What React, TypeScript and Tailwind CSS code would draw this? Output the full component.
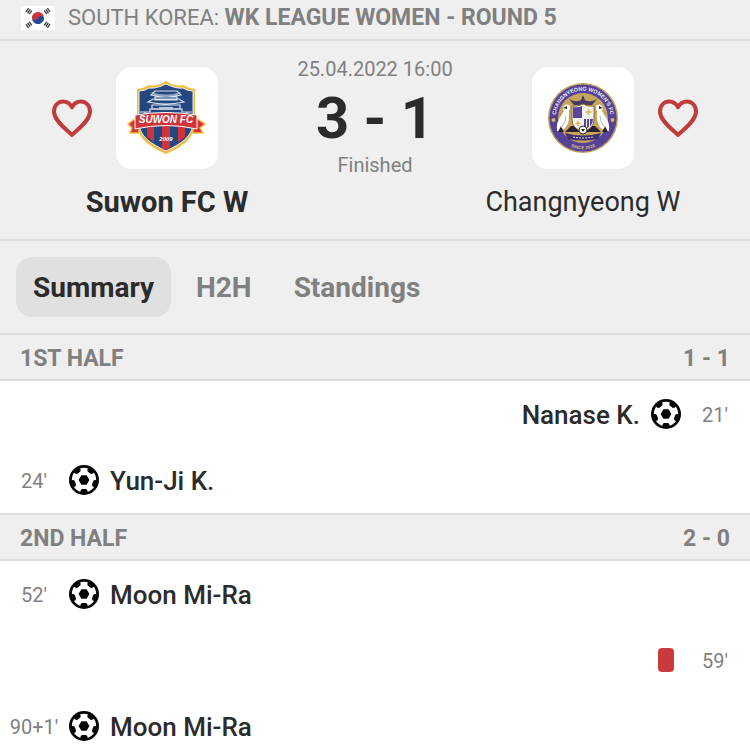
type Side = "home" | "away";

type MatchEvent = {
  minute: string;
  player?: string;
  side: Side;
  kind: "goal" | "red";
};

const halves: { title: string; score: string; events: MatchEvent[] }[] = [
  {
    title: "1ST HALF",
    score: "1 - 1",
    events: [
      { minute: "21'", player: "Nanase K.", side: "away", kind: "goal" },
      { minute: "24'", player: "Yun-Ji K.", side: "home", kind: "goal" },
    ],
  },
  {
    title: "2ND HALF",
    score: "2 - 0",
    events: [
      { minute: "52'", player: "Moon Mi-Ra", side: "home", kind: "goal" },
      { minute: "59'", side: "away", kind: "red" },
      { minute: "90+1'", player: "Moon Mi-Ra", side: "home", kind: "goal" },
    ],
  },
];

function Flag() {
  return (
    <svg viewBox="0 0 34 24" className="h-6 w-[34px]" aria-hidden="true">
      <rect width="34" height="24" fill="#fff" />
      <g transform="rotate(20 17 12)">
        <path d="M11 12a6 6 0 0 1 12 0z" fill="#cf3339" />
        <path d="M11 12a6 6 0 0 0 12 0z" fill="#214a97" />
        <circle cx="14" cy="12" r="3" fill="#cf3339" />
        <circle cx="20" cy="12" r="3" fill="#214a97" />
      </g>
      <g stroke="#444" strokeWidth="1.4">
        <path d="M5 5.8 7.6 2.2M6.6 7 9.2 3.4M8.2 8.2l2.6-3.6" />
        <path d="M29 5.8 26.4 2.2M27.4 7l-2.6-3.6M25.8 8.2l-2.6-3.6" />
        <path d="M5 18.2 7.6 21.8M6.6 17l2.6 3.6M8.2 15.8l2.6 3.6" />
        <path d="M29 18.2 26.4 21.8M27.4 17l-2.6 3.6M25.8 15.8l-2.6 3.6" />
      </g>
    </svg>
  );
}

function Heart() {
  return (
    <svg viewBox="0 0 48 48" className="size-12" fill="none" aria-hidden="true">
      <path
        d="M24 41C20 36.5 6 27.5 6 17.5C6 11.5 10.2 7.5 15 7.5C19.2 7.5 22.2 9.8 24 13.2C25.8 9.8 28.8 7.5 33 7.5C37.8 7.5 42 11.5 42 17.5C42 27.5 28 36.5 24 41Z"
        stroke="#c03c3c"
        strokeWidth="4"
        strokeLinejoin="round"
      />
    </svg>
  );
}

function Ball() {
  return (
    <svg viewBox="0 0 32 32" className="size-8 shrink-0" role="img" aria-label="Goal">
      <circle cx="16" cy="16" r="15" fill="#050505" />
      <circle cx="16" cy="16" r="12.2" fill="#fff" />
      <path d="M13.4 11.2h5.2l2.8 4.8-2.8 4.8h-5.2L10.600 16Z" fill="#050505" />
      {[0, 72, 144, 216, 288].map((angle) => (
        <path key={angle} d="M12 29 12.800 26 14 25H18L19.200 26 20 29Z" fill="#050505" transform={`rotate(${angle} 16 16)`} />
      ))}
    </svg>
  );
}

function RedCard() {
  return <span role="img" aria-label="Red card" className="mx-2 h-6 w-4 rounded bg-[#c93a3a]" />;
}

function SuwonCrest() {
  return (
    <svg viewBox="0 0 80 80" className="size-20" aria-hidden="true">
      <path d="M39 3Q49 9 56 7Q61 10 68 11V45C68 61 54 69 39 76C24 69 10 61 10 45V11Q17 10 22 7Q29 9 39 3Z" fill="#f2bd3c" />
      <path d="M39 6Q49 11 56 10Q60 13 66 13V44C66 59 53 66 39 73C25 66 12 59 12 44V13Q18 13 22 10Q29 11 39 6Z" fill="#23477f" stroke="#e8edf5" strokeWidth="1" />
      <path d="M24 14q15 5 30 0l-4 4H28Z" fill="#8fa4c4" />
      <g fill="none" stroke="#dbe3ef" strokeWidth="1.2">
        <path d="M24 17q15 4 30 0l-4-4H28ZM28 19h22v3H28ZM21 24q18 4 36 0l-5-3H26ZM25 27h28v4H25Z" />
        <path d="M13 34h10v-3h32v3h10M18 34v4M60 34v4" />
      </g>
      <path d="M32 29h14v3H32Z" fill="#b9c6da" />
      <g fill="#d2333b">
        <path d="M20 48h7v16l-7-5ZM35 48h8v22l-4 2-4-2ZM51 48h7v11l-7 5Z" />
        <path d="M9 40 1 46l4 4-2 5h9V48ZM69 40l9 6-5 4 3 5H66V48Z" stroke="#f2bd3c" strokeWidth="1.5" />
        <path d="M8 37Q39 32 70 37V51Q39 44 8 51Z" stroke="#fff" strokeWidth="1" />
      </g>
      <text x="39" y="44.500" textAnchor="middle" fill="#fff" fontSize="10" fontWeight="700" fontStyle="italic" fontFamily="Liberation Sans, sans-serif">
        SUWON FC
      </text>
      <text x="39" y="63" textAnchor="middle" fill="#fff" fontSize="6" fontWeight="700" fontStyle="italic" fontFamily="Liberation Sans, sans-serif">
        2009
      </text>
    </svg>
  );
}

function ChangnyeongCrest() {
  return (
    <svg viewBox="0 0 80 80" className="size-20" aria-hidden="true">
      <defs>
        <path id="ring-top" d="M14.5 50A27.4 27.4 0 1 1 65.5 50" />
        <path id="ring-bottom" d="M16 60A31.2 31.2 0 0 0 64 60" />
      </defs>
      <circle cx="40" cy="40" r="35" fill="#bc9d57" />
      <circle cx="40" cy="40" r="33.5" fill="#55409a" />
      <circle cx="40" cy="40" r="25" fill="#c6a65c" />
      <g fill="#eee" fontSize="5.4" fontWeight="700" fontFamily="Liberation Sans, sans-serif">
        <text textAnchor="middle">
          <textPath href="#ring-top" startOffset="50%">CHANGNYEONG WOMEN'S FC</textPath>
        </text>
        <text textAnchor="middle" fill="#d9bd77" fontSize="4.5">
          <textPath href="#ring-bottom" startOffset="50%">SINCE 2018</textPath>
        </text>
      </g>
      <circle cx="10.5" cy="42" r="2" fill="#d5b25c" />
      <circle cx="69.5" cy="42" r="2" fill="#d5b25c" />
      <path d="M26 21q7 4 12 1l2-5 2 5q5 3 12-1l-5 6H31Z" fill="#493a63" />
      <path d="M28 48h24l6 6H22Z" fill="#292131" />
      <path d="M29 28Q35 29 40 26Q45 29 51 28V42Q51 50 40 54Q29 50 29 42Z" fill="#f4f1f5" stroke="#8a713d" strokeWidth="1" />
      <path d="M30 29Q35 30 39 28V40H30ZM41 41h9q0 8-9 10Z" fill="#59469c" />
      <path d="M43.5 41v9M46.5 41v8" stroke="#eee" strokeWidth="1" />
      <path d="M45.5 31v6M42.5 34h6M35 43v5M32.5 45.5h5" stroke="#d5b25c" strokeWidth="1.5" />
      <g id="bird">
        <path d="M20 30q2-5 6-3 2 2 0 6l0 6q0 7-4 11l-5 4-3-1q-1-9 4-15l3-5Z" fill="#fff" />
        <path d="M20 30l4-2v3ZM15 54l3-6 3 6Z" fill="#292131" />
        <path d="M23 38q0 7-5 12" stroke="#b9b2bd" strokeWidth="1" fill="none" />
      </g>
      <use href="#bird" transform="matrix(-1 0 0 1 80 0)" />
      <circle cx="40" cy="52" r="4" fill="#fff" stroke="#292131" />
      <path d="M38 51h4l-2 3Z" fill="#292131" />
      <path d="M22 55q18 5 36 0l-3 6q-15 3-30 0Z" fill="#40306f" />
      <path d="M30 59q10 2 20 0" stroke="#ddd" strokeWidth="1" strokeDasharray="2 1" fill="none" />
    </svg>
  );
}

function EventRow({ event }: { event: MatchEvent }) {
  const away = event.side === "away";
  return (
    <li className={`flex h-[66px] items-center ${away ? "flex-row-reverse" : ""}`}>
      <span className={`w-[68px] shrink-0 pt-px text-xl text-[#808080] ${away ? "pr-[22px] text-right" : "text-center"}`}>
        {event.minute}
      </span>
      {event.kind === "goal" ? <Ball /> : <RedCard />}
      {event.player && <span className="px-[10px] pt-[2px] text-[26px] font-medium text-[#2b2b2b]">{event.player}</span>}
    </li>
  );
}

export default function App() {
  return (
    <main className="bg-white font-['Roboto',sans-serif] text-[#2b2b2b]">
      <div className="flex items-center gap-[13px] border-b-2 border-[#dddddd] bg-[#efefef] pb-[3px] pl-[21px] text-[22px] leading-9 text-[#808080]">
        <Flag />
        <p>
          SOUTH KOREA: <strong className="text-[23px] font-bold">WK LEAGUE WOMEN - ROUND 5</strong>
        </p>
      </div>

      <header className="grid grid-cols-[1fr_154px_1fr] border-b-2 border-[#dddddd] bg-[#efefef] px-9 pt-[26px] pb-4">
        <div className="text-center">
          <div className="grid grid-cols-[1fr_auto_1fr] items-center gap-5">
            <button type="button" aria-label="Add Suwon FC W to favourites" className="justify-self-end">
              <Heart />
            </button>
            <div className="grid size-[102px] place-items-center rounded-2xl bg-white">
              <SuwonCrest />
            </div>
          </div>
          <h2 className="mt-3 text-[29px] leading-[42px] font-bold">Suwon FC W</h2>
        </div>

        <div className="flex flex-col items-center whitespace-nowrap text-[#808080]">
          <p className="-mt-3 text-xl leading-7">25.04.2022 16:00</p>
          <p className="text-[58px] leading-[70px] font-bold text-[#2b2b2b]">3 - 1</p>
          <p className="text-xl leading-6">Finished</p>
        </div>

        <div className="text-center">
          <div className="grid grid-cols-[1fr_auto_1fr] items-center gap-5">
            <div className="col-start-2 grid size-[102px] place-items-center rounded-2xl bg-white">
              <ChangnyeongCrest />
            </div>
            <button type="button" aria-label="Add Changnyeong W to favourites" className="justify-self-start">
              <Heart />
            </button>
          </div>
          <h2 className="mt-3 text-[27px] leading-[42px] font-normal">Changnyeong W</h2>
        </div>
      </header>

      <nav className="flex gap-2 bg-[#efefef] p-4 text-[28px] font-bold text-[#808080]">
        <button type="button" className="rounded-2xl bg-[#e0e0e0] px-[17px] pt-[2px] leading-[58px] text-[#2b2b2b]">Summary</button>
        <button type="button" className="px-[17px] pt-[2px] leading-[58px]">H2H</button>
        <button type="button" className="px-[17px] pt-[2px] leading-[58px]">Standings</button>
      </nav>

      {halves.map((half) => (
        <section key={half.title}>
          <div className="flex justify-between border-y-2 border-[#dddddd] bg-[#efefef] px-5 pt-[4px] text-[23px] leading-[40px] font-bold text-[#808080]">
            <h3>{half.title}</h3>
            <span>{half.score}</span>
          </div>
          <ul>
            {half.events.map((event) => (
              <EventRow key={event.minute} event={event} />
            ))}
          </ul>
        </section>
      ))}
    </main>
  );
}
